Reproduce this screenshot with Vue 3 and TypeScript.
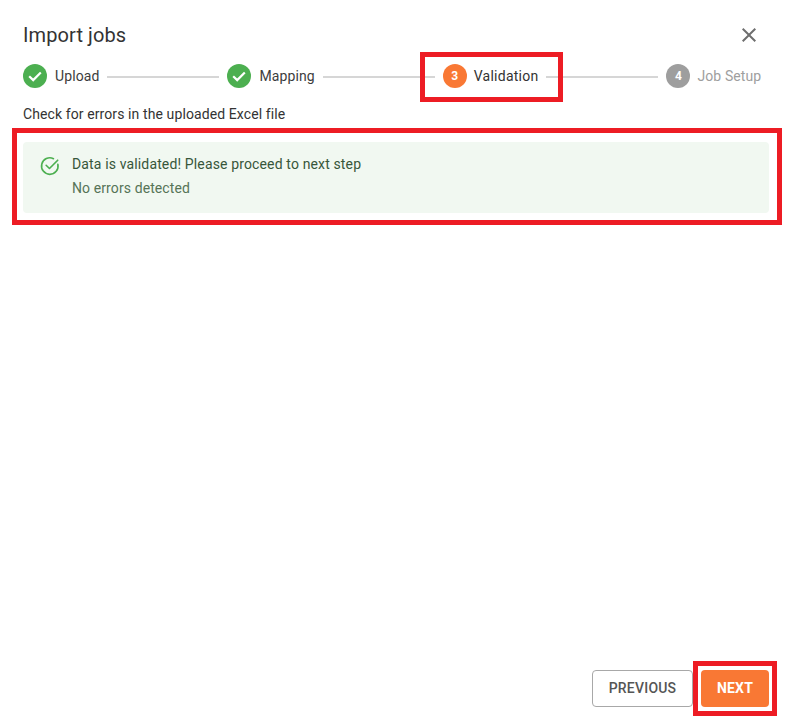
<script setup lang="ts">
interface Step {
  label: string
  state: 'done' | 'active' | 'todo'
  num?: number
}
const steps: Step[] = [
  { label: 'Upload', state: 'done' },
  { label: 'Mapping', state: 'done' },
  { label: 'Validation', state: 'active', num: 3 },
  { label: 'Job Setup', state: 'todo', num: 4 }
]
</script>

<template>
  <div class="dialog">
    <header class="head">
      <h1 class="title">Import jobs</h1>
      <svg class="close" viewBox="0 0 24 24" width="24" height="24" aria-label="Close">
        <path d="M19 6.41 17.59 5 12 10.59 6.41 5 5 6.41 10.59 12 5 17.59 6.41 19 12 13.41 17.59 19 19 17.59 13.41 12z" fill="#6e6e6e" />
      </svg>
    </header>

    <div class="stepper">
      <template v-for="(s, i) in steps" :key="s.label">
        <div class="step">
          <svg v-if="s.state === 'done'" class="dot" viewBox="0 0 24 24" width="24" height="24">
            <circle cx="12" cy="12" r="12" fill="#4caf50" />
            <path d="M6.2 12.2l4 3.9 7.6-7.7" fill="none" stroke="#fff" stroke-width="2.2" />
          </svg>
          <span v-else class="num" :class="s.state">{{ s.num }}</span>
          <span class="label" :class="s.state">{{ s.label }}</span>
        </div>
        <div v-if="i < steps.length - 1" class="line"></div>
      </template>
    </div>

    <p class="hint">Check for errors in the uploaded Excel file</p>

    <section class="alert">
      <svg class="alert-icon" viewBox="0 0 24 24" width="22" height="22">
        <path d="M20.6 10.2A9 9 0 1 1 15.8 4" fill="none" stroke="#4caf50" stroke-width="1.8" stroke-linecap="round" />
        <path d="M7.8 11.2l3.6 3.5 9-9" fill="none" stroke="#4caf50" stroke-width="1.8" stroke-linecap="round" stroke-linejoin="round" />
      </svg>
      <div class="alert-text">
        <div class="alert-title">Data is validated! Please proceed to next step</div>
        <div class="alert-sub">No errors detected</div>
      </div>
    </section>

    <footer class="foot">
      <button class="btn prev" type="button">PREVIOUS</button>
      <button class="btn next" type="button">NEXT</button>
    </footer>

    <div class="mark mark-step"></div>
    <div class="mark mark-alert"></div>
    <div class="mark mark-next"></div>
  </div>
</template>

<style>
html, body { margin: 0; background: #fff; }
</style>

<style scoped>
.dialog {
  position: relative;
  box-sizing: border-box;
  width: 790px;
  height: 720px;
  padding: 22px 21px 13px 23px;
  display: flex;
  flex-direction: column;
  background: #fff;
  font-family: Roboto, "Liberation Sans", sans-serif;
  color: #333;
}
.head {
  display: flex;
  justify-content: space-between;
  align-items: center;
  height: 26px;
}
.title {
  margin: 0;
  font-size: 20px;
  font-weight: 400;
  line-height: 26px;
  letter-spacing: 0.1px;
  color: #333;
}
.close { margin-right: 8px; }
.stepper {
  display: flex;
  align-items: center;
  margin-top: 16px;
  height: 24px;
}
.step {
  display: flex;
  align-items: center;
  gap: 8px;
  flex: none;
}
.dot { display: block; }
.num {
  width: 24px;
  height: 24px;
  border-radius: 50%;
  display: flex;
  align-items: center;
  justify-content: center;
  color: #fff;
  font-size: 12px;
  font-weight: 700;
}
.num.active { background: #f97834; }
.num.todo { background: #9e9e9e; }
.label {
  font-size: 14px;
  font-weight: 400;
  line-height: 20px;
  letter-spacing: 0.1px;
  color: #3d3d3d;
}
.label.active { margin-left: -1px; color: #333; letter-spacing: 0.25px; }
.label.todo { margin-left: -1px; color: #9e9e9e; }
.line {
  flex: none;
  width: 112px;
  height: 2px;
  margin: 2px 8px 0;
  background: #d6d6d6;
}
.hint {
  margin: 16px 0 0;
  font-size: 14px;
  line-height: 20px;
  letter-spacing: 0.1px;
  color: #333;
}
.alert {
  box-sizing: border-box;
  width: 746px;
  height: 71px;
  margin-top: 18px;
  padding: 12px 16px 0 16px;
  display: flex;
  gap: 11px;
  background: #f1f8f1;
  border-radius: 4px;
}
.alert-icon { flex: none; margin-top: 1px; }
.alert-title {
  font-size: 14px;
  font-weight: 400;
  line-height: 20px;
  letter-spacing: 0.14px;
  color: #37563a;
}
.alert-sub {
  margin-top: 4px;
  font-size: 14px;
  line-height: 20px;
  letter-spacing: 0.1px;
  color: #567457;
}
.foot {
  margin-top: auto;
  display: flex;
  justify-content: flex-end;
  gap: 8px;
}
.btn {
  box-sizing: border-box;
  height: 37px;
  padding: 0 0 2px;
  border-radius: 4px;
  font-family: inherit;
  font-size: 14px;
  line-height: 20px;
  letter-spacing: 0.2px;
  cursor: pointer;
}
.prev {
  width: 101px;
  background: #fff;
  border: 1px solid #a8a8a8;
  color: #555;
  font-weight: 500;
}
.next {
  width: 68px;
  background: #f97834;
  border: none;
  color: #fff;
  font-weight: 700;
}
.mark {
  position: absolute;
  box-sizing: border-box;
  border: 5px solid #ed1c24;
  pointer-events: none;
}
.mark-step { left: 420px; top: 52px; width: 143px; height: 50px; }
.mark-alert { left: 12px; top: 128px; width: 770px; height: 97px; }
.mark-next { left: 693px; top: 661px; width: 84px; height: 55px; }
</style>
